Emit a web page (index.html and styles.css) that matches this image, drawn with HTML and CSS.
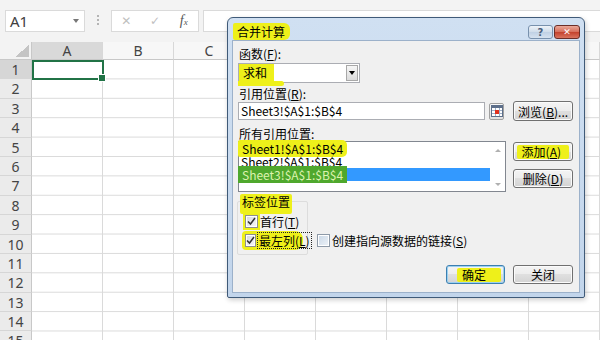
FILE: index.html
```html
<!DOCTYPE html>
<html lang="zh-CN">
<head>
    <meta charset="UTF-8">
    <meta name="viewport" content="width=device-width, initial-scale=1.0">
    <title>合并计算</title>
    <link rel="stylesheet" href="styles.css">
</head>
<body>
    <div class="formula-bar">
        <div class="name-box">A1<span class="name-arrow"></span></div>
        <div class="bar-dots"></div>
        <div class="fx-buttons">
            <span class="fx-cancel">✕</span>
            <span class="fx-enter">✓</span>
            <span class="fx-func">f<small>x</small></span>
        </div>
        <div class="fx-input"></div>
    </div>

    <div class="sheet">
        <div class="corner"></div>
        <div class="col-heads">
            <div class="col-head sel">A</div>
            <div class="col-head">B</div>
            <div class="col-head">C</div>
            <div class="col-head">D</div>
            <div class="col-head">E</div>
            <div class="col-head">F</div>
            <div class="col-head">G</div>
            <div class="col-head">H</div>
        </div>
        <div class="row-heads">
            <div class="row-head sel">1</div>
            <div class="row-head">2</div>
            <div class="row-head">3</div>
            <div class="row-head">4</div>
            <div class="row-head">5</div>
            <div class="row-head">6</div>
            <div class="row-head">7</div>
            <div class="row-head">8</div>
            <div class="row-head">9</div>
            <div class="row-head">10</div>
            <div class="row-head">11</div>
            <div class="row-head">12</div>
            <div class="row-head">13</div>
            <div class="row-head">14</div>
            <div class="row-head">15</div>
        </div>
        <div class="cells">
            <div class="active-cell"></div>
        </div>
    </div>

    <!-- consolidate dialog -->
    <div class="dialog">
        <div class="title-bar">
            <span class="title"><mark>合并计算</mark></span>
            <div class="caption-btns">
                <span class="cap-help">?</span>
                <span class="cap-close">✕</span>
            </div>
        </div>
        <div class="client">
            <div class="lbl">函数(<u>F</u>):</div>
            <div class="combo">
                <span class="combo-val">求和</span>
                <span class="combo-btn"></span>
            </div>
            <div class="lbl ref-label">引用位置(<u>R</u>):</div>
            <div class="ref-row">
                <div class="textbox">Sheet3!$A$1:$B$4</div>
                <span class="pick-btn">
                    <svg width="12" height="12" viewBox="0 0 12 12">
                        <rect x="0.5" y="0.5" width="11" height="11" fill="#fff" stroke="#5d6f8a"/>
                        <rect x="1" y="1" width="10" height="2" fill="#5d6f8a"/>
                        <path d="M1 5.5h10M1 8.5h10M4.5 3v8M8.5 3v8" stroke="#9fb0c8" stroke-width="1"/>
                        <rect x="4" y="5" width="4" height="4" fill="#e0301e"/>
                    </svg>
                </span>
                <button class="btn browse">浏览(<u>B</u>)...</button>
            </div>
            <div class="lbl list-label">所有引用位置:</div>
            <div class="list-row">
                <div class="listbox">
                    <div class="items">
                        <div class="item"><mark>Sheet1!$A$1:$B$4</mark></div>
                        <div class="item">Sheet2!$A$1:$B$4</div>
                        <div class="item selected"><span class="mark-green">Sheet3!$A$1:$B$4</span></div>
                    </div>
                    <div class="scrollbar">
                        <span class="arrow-up"></span>
                        <span class="arrow-down"></span>
                    </div>
                </div>
                <div class="side-btns">
                    <button class="btn"><span class="hl">添加(<u>A</u>)</span></button>
                    <button class="btn plain">删除(<u>D</u>)</button>
                </div>
            </div>
            <div class="options">
                <fieldset class="group">
                    <legend>标签位置</legend>
                    <div class="check">
                        <span class="box checked marked-box">
                            <svg width="9" height="9" viewBox="0 0 9 9"><path d="M1 4.5 3.5 7 8 1" fill="none" stroke="#333" stroke-width="1.5"/></svg>
                        </span>
                        首行(<u>T</u>)
                    </div>
                    <div class="check marked">
                        <span class="box checked">
                            <svg width="9" height="9" viewBox="0 0 9 9"><path d="M1 4.5 3.5 7 8 1" fill="none" stroke="#333" stroke-width="1.5"/></svg>
                        </span>
                        <span class="focus">最左列(<u>L</u>)</span>
                    </div>
                </fieldset>
                <div class="check link-check">
                    <span class="box empty"></span>
                    创建指向源数据的链接(<u>S</u>)
                </div>
            </div>
            <div class="actions">
                <button class="btn default ok"><span class="hl">确定</span></button>
                <button class="btn plain">关闭</button>
            </div>
        </div>
    </div>
</body>
</html>
```

FILE: styles.css
```css
* {
    box-sizing: border-box;
}
body {
    margin: 0;
    width: 600px;
    height: 340px;
    overflow: hidden;
    position: relative;
    background: #fff;
    font-family: "Noto Sans", "Liberation Sans", sans-serif;
    color: #444;
}

/* formula bar */
.formula-bar {
    height: 42px;
    padding: 10px 0 0 5px;
    display: flex;
    align-items: flex-start;
    background: #f3f3f3;
}
.name-box {
    width: 80px;
    height: 22px;
    background: #fff;
    border: 1px solid #dadada;
    display: flex;
    align-items: center;
    justify-content: space-between;
    padding: 0 5px 0 4px;
    font-size: 15px;
    color: #404040;
}
.name-arrow {
    border-top: 4px solid #777;
    border-left: 3px solid transparent;
    border-right: 3px solid transparent;
}
.bar-dots {
    width: 2px;
    height: 12px;
    margin: 5px 0 0 12px;
    background: repeating-linear-gradient(to bottom, #b4b4b4 0 2px, transparent 2px 4px);
}
.fx-buttons {
    width: 88px;
    height: 22px;
    margin-left: 12px;
    background: #fff;
    border: 1px solid #dadada;
    display: flex;
    align-items: center;
}
.fx-buttons span {
    width: 29px;
    text-align: center;
    font-family: "DejaVu Sans", sans-serif;
    font-size: 12px;
    color: #c0c0c0;
}
.fx-buttons .fx-func {
    font-family: "Liberation Serif", serif;
    font-style: italic;
    font-size: 14px;
    color: #555;
}
.fx-func small {
    font-size: 9px;
}
.fx-input {
    flex: 1;
    height: 22px;
    margin-left: 4px;
    background: #fff;
    border: 1px solid #dadada;
    border-right: none;
}

/* grid */
.sheet {
    display: grid;
    grid-template-columns: 32px 568px;
    grid-template-rows: 18px 280px;
}
.corner {
    background: #f3f3f3;
    border-right: 1px solid #c8c8c8;
    border-bottom: 1px solid #c8c8c8;
    display: flex;
    align-items: flex-end;
    justify-content: flex-end;
    padding: 0 2px 2px 0;
}
.corner::before {
    content: "";
    width: 14px;
    height: 12px;
    background: linear-gradient(to top left, #c4c4c4 50%, transparent 50%);
}
.col-heads {
    display: flex;
}
.col-head {
    flex: 0 0 71px;
    border-right: 1px solid #d8d8d8;
    border-bottom: 1px solid #c8c8c8;
    background: #f7f7f7;
    text-align: center;
    font-size: 14px;
    line-height: 17px;
}
.col-head.sel {
    background: #d9d9d9;
}
.row-heads {
    overflow: hidden;
}
.row-head {
    height: 19.4px;
    border-bottom: 1px solid #d6d6d6;
    border-right: 1px solid #c8c8c8;
    background: #ebebeb;
    text-align: center;
    font-size: 14px;
    line-height: 19px;
}
.row-head.sel {
    background: #d6d6d6;
}
.cells {
    overflow: hidden;
    background-color: #fff;
    background-image:
        linear-gradient(to right, transparent 70px, #dadada 70px),
        linear-gradient(to bottom, transparent 18.4px, #dadada 18.4px);
    background-size: 71px 100%, 100% 19.4px;
}
.active-cell {
    width: 72px;
    height: 20.4px;
    border: 2px solid #217346;
    position: relative;
}
.active-cell::after {
    content: "";
    position: absolute;
    right: -4px;
    bottom: -4px;
    width: 6px;
    height: 6px;
    background: #217346;
    border: 1px solid #fff;
}

/* dialog */
mark {
    background: #eef01a;
    color: inherit;
    border-radius: 2px;
}
.dialog {
    position: absolute;
    left: 227px;
    top: 17px;
    width: 358px;
    height: 281px;
    border: 1px solid #3f5a78;
    border-radius: 6px 6px 2px 2px;
    background: linear-gradient(#d0e0f2, #c2d5eb);
    padding: 0 5px 5px;
    display: flex;
    flex-direction: column;
    font-family: "Noto Sans CJK SC", "Liberation Sans", sans-serif;
    font-size: 12px;
    color: #000;
    box-shadow: 1px 2px 5px rgba(0, 0, 0, 0.2);
}
.title-bar {
    height: 23px;
    display: flex;
    justify-content: space-between;
    align-items: flex-start;
}
.title {
    margin-top: 6px;
    line-height: 16px;
}
.title mark {
    padding: 0 5px 0 4px;
    border-radius: 2px 6px 6px 2px;
}
.caption-btns {
    display: flex;
    gap: 1px;
    margin: 7px -1px 0 0;
}
.cap-help,
.cap-close {
    height: 14px;
    display: flex;
    align-items: center;
    justify-content: center;
    border-radius: 3px;
    font-family: "DejaVu Sans", sans-serif;
    font-weight: bold;
}
.cap-help {
    width: 25px;
    border: 1px solid #7891ad;
    background: linear-gradient(#eef3f9, #cfdcea 50%, #bfd0e4 50%, #d6e2ef);
    color: #4a5f7c;
    font-size: 10px;
}
.cap-close {
    width: 26px;
    border: 1px solid #6b2e28;
    background: linear-gradient(#eaa899, #d56d5a 50%, #c3402b 50%, #d9735e);
    color: #fff;
    font-size: 9px;
}
.client {
    flex: 1;
    background: #f0f0f0;
    box-shadow: 0 0 0 1px #9cb1ca;
    padding: 5px 6px 0 5px;
}
.lbl {
    line-height: 15px;
    margin-left: 1px;
}
.ref-label {
    margin-top: 3px;
}
.list-label {
    margin-top: 5px;
}
.combo {
    position: relative;
    width: 122px;
    height: 20px;
    margin-top: 2px;
    background: #fff;
    border: 1px solid #abadb3;
    display: flex;
    justify-content: space-between;
}
.combo-val {
    background: #eef01a;
    padding: 0 7px 0 4px;
    line-height: 18px;
}
.combo::after {
    content: "";
    position: absolute;
    left: -1px;
    top: 17px;
    width: 46px;
    height: 5px;
    background: #eef01a;
    border-radius: 0 4px 4px 0;
}
.combo-btn {
    width: 12px;
    margin: 1px 1px 1px 0;
    border: 1px solid #a8a8a8;
    background: linear-gradient(#f6f6f6, #dcdcdc);
    display: flex;
    align-items: center;
    justify-content: center;
}
.combo-btn::before {
    content: "";
    border-top: 4px solid #000;
    border-left: 3px solid transparent;
    border-right: 3px solid transparent;
}
.ref-row {
    display: flex;
    align-items: center;
    height: 20px;
}
.textbox {
    width: 248px;
    height: 18px;
    background: #fff;
    border: 1px solid #abadb3;
    line-height: 16px;
    padding-left: 2px;
}
.pick-btn {
    width: 15px;
    height: 17px;
    margin-left: 4px;
    border: 1px solid #a0a0a0;
    border-radius: 2px;
    background: linear-gradient(#fafafa, #e0e0e0);
    display: flex;
    align-items: center;
    justify-content: center;
}
.btn {
    width: 60px;
    height: 19px;
    padding: 0 3px 0 0;
    border: 1px solid #707070;
    border-radius: 3px;
    background: linear-gradient(#f4f4f4, #ececec 50%, #dfdfdf 50%, #d3d3d3);
    box-shadow: inset 0 0 0 1px #fbfbfb;
    font: inherit;
    color: #000;
    display: flex;
    align-items: center;
    justify-content: flex-end;
}
.btn.plain {
    padding: 0;
    justify-content: center;
}
.btn.browse {
    height: 20px;
    margin-left: 9px;
    padding: 0;
    justify-content: center;
}
.btn .hl {
    background: #eef01a;
    line-height: 14px;
    padding: 0 8px 0 5px;
    border-radius: 2px;
}
.btn.ok .hl {
    padding: 0 15px 0 5px;
}
.btn.default {
    width: 59px;
    border-color: #3c7fb1;
    box-shadow: inset 0 0 0 1px #9bd0f0;
}
.list-row {
    display: flex;
    align-items: flex-start;
}
.listbox {
    width: 268px;
    height: 51px;
    border: 1px solid #828790;
    background: #fff;
    display: flex;
}
.items {
    flex: 1;
}
.item {
    height: 13px;
    line-height: 13px;
    padding-left: 2px;
    white-space: nowrap;
}
.item mark {
    padding: 0 4px;
    margin-left: -3px;
    border-radius: 2px 5px 5px 2px;
}
.item.selected {
    background: #3399ff;
}
.mark-green {
    background: #4fa82d;
    color: #dcf2ae;
    padding: 0 4px;
    margin-left: -3px;
}
.scrollbar {
    width: 15px;
    display: flex;
    flex-direction: column;
    justify-content: space-between;
    align-items: center;
    padding: 7px 0 5px;
}
.arrow-up {
    border-bottom: 3px solid #b0b0b0;
    border-left: 3px solid transparent;
    border-right: 3px solid transparent;
}
.arrow-down {
    border-top: 3px solid #b0b0b0;
    border-left: 3px solid transparent;
    border-right: 3px solid transparent;
}
.side-btns {
    margin-left: 7px;
    padding-top: 1px;
    display: flex;
    flex-direction: column;
    gap: 8px;
}
.options {
    display: flex;
    align-items: flex-end;
    margin-top: 2px;
}
.group {
    width: 71px;
    margin: 0 0 0 -1px;
    padding: 3px 0 4px 7px;
    border: 1px solid #dcdcdc;
    border-radius: 2px;
}
.group legend {
    padding: 0 2px;
    margin-left: -5px;
    line-height: 15px;
    background: #eef01a;
    border-radius: 2px;
    box-shadow: 0 5px 0 #eef01a;
}
.check {
    display: flex;
    align-items: center;
    height: 19px;
    white-space: nowrap;
}
.box {
    width: 13px;
    height: 13px;
    margin-right: 2px;
    border: 1px solid #8e8f8f;
    background: linear-gradient(135deg, #d4d8dd, #f7f7f7);
    box-shadow: inset 0 0 0 1px #fff;
    display: flex;
    align-items: center;
    justify-content: center;
}
.box.marked-box {
    outline: 2px solid #eef01a;
}
.box.empty {
    border-color: #8e9aa8;
    background: linear-gradient(135deg, #c9d7e6, #eef3f8);
}
.check.marked {
    width: 61px;
    margin-left: -3px;
    padding-left: 3px;
    background: #eef01a;
    border-radius: 4px 8px 8px 4px;
}
.focus {
    outline: 1px dotted #222;
    padding: 0 1px;
    line-height: 15px;
}
.link-check {
    margin: 0 0 5px 9px;
}
.actions {
    display: flex;
    justify-content: flex-end;
    gap: 8px;
    margin-top: 10px;
}
```
